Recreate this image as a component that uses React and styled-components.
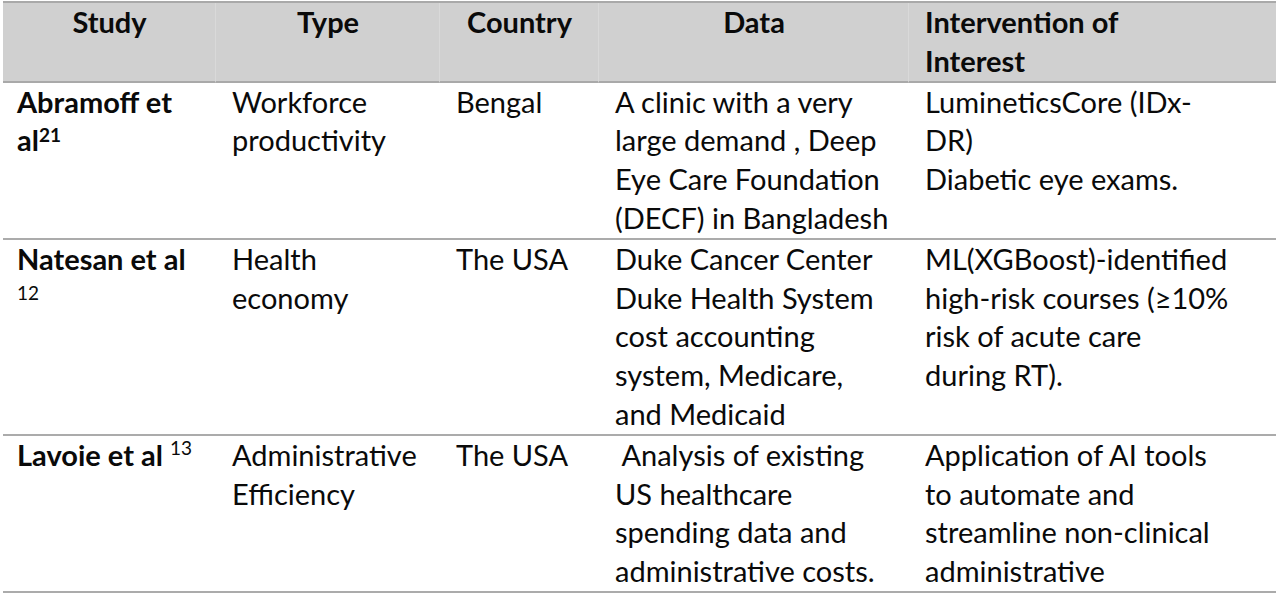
import React from "react";
import styled, { createGlobalStyle } from "styled-components";

const Global = createGlobalStyle`
  html, body { margin: 0; padding: 0; background: #ffffff; }
  body { font-family: Lato, "Open Sans", sans-serif; color: #0a0a0a; }
`;

const Page = styled.div`
  padding: 1px 4px 0 3px;
`;

const Table = styled.div`
  display: grid;
  grid-template-columns: 213px 224px 159px 310px 1fr;
  border-top: 2px solid #a9a9a9;
  border-bottom: 2px solid #ababab;
`;

const HeadCell = styled.div`
  background: #d0d0d0;
  padding: 0 ${(p) => (p.$first ? "14px" : "16px")};
  font-weight: 700;
  font-size: 29px;
  line-height: 38.8px;
  text-align: ${(p) => p.$align || "center"};
  border-bottom: 2px solid #a9a9a9;
  border-left: ${(p) => (p.$first ? "none" : "1px solid #d9d9d9")};
  margin-left: ${(p) => (p.$first ? "0" : "-1px")};
`;

const Cell = styled.div`
  padding: 0 ${(p) => (p.$first ? "14px" : "16px")};
  font-size: 29px;
  line-height: 38.8px;
  font-weight: ${(p) => (p.$bold ? 700 : 400)};
  white-space: nowrap;
  border-top: ${(p) => (p.$sep ? "2px solid #ababab" : "none")};
`;

const Sup = styled.sup`
  font-size: 19px;
  line-height: 0;
  vertical-align: ${(p) => p.$raise || "9px"};
  font-weight: ${(p) => (p.$bold ? 700 : 400)};
`;

const rows = [
  {
    study: (
      <>
        Abramoff et
        <br />
        al<Sup $bold>21</Sup>
      </>
    ),
    type: ["Workforce", "productivity"],
    country: ["Bengal"],
    data: ["A clinic with a very", "large demand , Deep", "Eye Care Foundation", "(DECF) in Bangladesh"],
    intervention: ["LumineticsCore (IDx-", "DR)", "Diabetic eye exams."],
  },
  {
    study: (
      <>
        Natesan et al
        <br />
        <Sup>12</Sup>
      </>
    ),
    type: ["Health", "economy"],
    country: ["The USA"],
    data: ["Duke Cancer Center", "Duke Health System", "cost accounting", "system, Medicare,", "and Medicaid"],
    intervention: ["ML(XGBoost)-identified", "high-risk courses (≥10%", "risk of acute care", "during RT)."],
  },
  {
    study: (
      <>
        Lavoie et al <Sup $raise="11px">13</Sup>
      </>
    ),
    type: ["Administrative", "Efficiency"],
    country: ["The USA"],
    data: ["\u00a0Analysis of existing", "US healthcare", "spending data and", "administrative costs."],
    intervention: ["Application of AI tools", "to automate and", "streamline non-clinical", "administrative"],
  },
];

const Lines = ({ items }) =>
  items.map((t, i) => (
    <React.Fragment key={i}>
      {i > 0 && <br />}
      {t}
    </React.Fragment>
  ));

export default function App() {
  return (
    <>
      <Global />
      <Page>
        <Table>
          <HeadCell $first>Study</HeadCell>
          <HeadCell>Type</HeadCell>
          <HeadCell>Country</HeadCell>
          <HeadCell>Data</HeadCell>
          <HeadCell $align="left">
            Intervention of
            <br />
            Interest
          </HeadCell>
          {rows.map((r, i) => (
            <React.Fragment key={i}>
              <Cell $first $bold $sep={i > 0}>
                {r.study}
              </Cell>
              <Cell $sep={i > 0}>
                <Lines items={r.type} />
              </Cell>
              <Cell $sep={i > 0}>
                <Lines items={r.country} />
              </Cell>
              <Cell $sep={i > 0}>
                <Lines items={r.data} />
              </Cell>
              <Cell $sep={i > 0}>
                <Lines items={r.intervention} />
              </Cell>
            </React.Fragment>
          ))}
        </Table>
      </Page>
    </>
  );
}
